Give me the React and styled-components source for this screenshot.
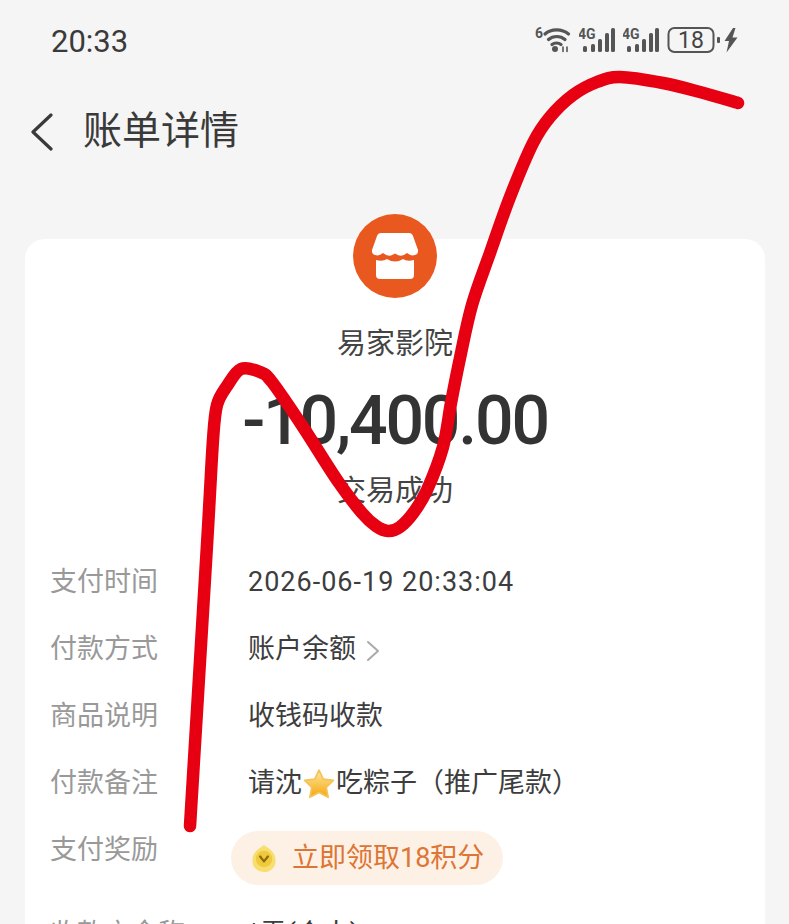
import React from "react";
import styled, { createGlobalStyle } from "styled-components";

const GlobalStyle = createGlobalStyle`
  html, body {
    margin: 0;
    padding: 0;
    background: #f5f5f5;
  }
  body {
    font-family: "Roboto", "Noto Sans CJK SC", sans-serif;
  }
`;

const Page = styled.div`
  position: relative;
  width: 789px;
  height: 924px;
  overflow: hidden;
  background: #f5f5f5;
  color: #333;
`;

const StatusBar = styled.div`
  height: 82px;
  padding: 0 50px 0 51px;
  display: flex;
  align-items: center;
  justify-content: space-between;
  box-sizing: border-box;
`;

const Time = styled.span`
  font-size: 31px;
  color: #3a3a3a;
`;

const StatusIcons = styled.div`
  display: flex;
  align-items: center;
  gap: 8px;
  margin-top: -2px;
`;

const Header = styled.div`
  height: 99px;
  padding-left: 30px;
  display: flex;
  align-items: center;
  gap: 30px;
`;

const Title = styled.h1`
  margin: 0;
  font-size: 39px;
  font-weight: 400;
  line-height: 1;
  color: #3a3a3a;
`;

const Card = styled.div`
  margin: 58px 24px 0 25px;
  padding-top: 59px;
  height: 800px;
  position: relative;
  background: #fff;
  border-radius: 20px;
`;

const ShopBadge = styled.div`
  position: absolute;
  top: -25px;
  left: 328px;
  width: 84px;
  height: 84px;
`;

const Summary = styled.div`
  display: flex;
  flex-direction: column;
  align-items: center;
`;

const Merchant = styled.div`
  margin-top: 29px;
  font-size: 29px;
  line-height: 34px;
  color: #444;
`;

const Amount = styled.div`
  margin-top: 20px;
  font-size: 68px;
  font-weight: 500;
  line-height: 80px;
  letter-spacing: -2.2px;
  color: #333;
`;

const Status = styled.div`
  margin-top: 13px;
  font-size: 29px;
  line-height: 34px;
  color: #444;
`;

const Rows = styled.div`
  margin-top: 41px;
  padding-left: 26px;
  display: flex;
  flex-direction: column;
`;

const Row = styled.div`
  height: ${(props) => (props.$tall ? "84px" : "67px")};
  display: flex;
  align-items: flex-start;
  line-height: 67px;
`;

const Label = styled.span`
  width: 197px;
  margin-left: -1px;
  margin-right: 1px;
  flex: none;
  font-size: 27px;
  color: #999;
`;

const Value = styled.span`
  display: flex;
  align-items: center;
  font-size: 27px;
  letter-spacing: ${(props) => (props.$numeric ? "1px" : "0")};
  color: #3d3d3d;
  white-space: nowrap;
`;

const Pill = styled.div`
  margin-left: -17px;
  margin-top: 14px;
  width: 272px;
  height: 54px;
  box-sizing: border-box;
  padding-left: 20px;
  display: flex;
  align-items: center;
  gap: 15px;
  border-radius: 27px;
  background: #fdf0e4;
  color: #dd7534;
  font-size: 27px;
  line-height: 54px;
`;

const Scribble = styled.svg`
  position: absolute;
  top: 0;
  left: 0;
  pointer-events: none;
`;

const SignalIcon = () => (
  <svg width="36" height="28" viewBox="0 0 36 28">
    <text x="-1" y="13" fontSize="14" fontWeight="700" fontFamily="Roboto" fill="#555">4G</text>
    <rect x="4" y="20" width="4" height="6" rx="1.6" fill="#555" />
    <rect x="12" y="18" width="4" height="8" rx="1.6" fill="#555" />
    <rect x="19" y="13" width="4" height="13" rx="1.6" fill="#555" />
    <rect x="26" y="7" width="4" height="19" rx="1.6" fill="#555" />
    <rect x="32" y="2" width="4" height="24" rx="1.6" fill="#555" />
  </svg>
);

const WifiIcon = () => (
  <svg width="36" height="28" viewBox="0 0 36 28" fill="none" stroke="#555" strokeWidth="3.2" strokeLinecap="round">
    <text x="0" y="12" fontSize="14" fontWeight="700" fontFamily="Roboto" fill="#555" stroke="none">6</text>
    <path d="M10 8C16 2.5 27 2.5 33.5 8" />
    <path d="M13.5 13.5C18 9.5 25.5 9.5 30 13.5" />
    <path d="M17 18.5C19.5 16.5 23.5 16.5 26 18.5" />
    <circle cx="20" cy="23" r="3" fill="#555" stroke="none" />
    <path d="M28 21v4.5M32 21v4.5" strokeWidth="1.6" />
  </svg>
);

const BatteryIcon = () => (
  <svg width="72" height="28" viewBox="0 0 72 28" fill="none">
    <rect x="1.5" y="2" width="45" height="24" rx="6" stroke="#555" strokeWidth="2" />
    <text x="24" y="22" textAnchor="middle" fontSize="23" fontFamily="Roboto" fill="#444">18</text>
    <rect x="50" y="11" width="3" height="6" rx="1" fill="#555" />
    <path d="M66 2 L57.5 15 H62 L59.5 26.5 L70.5 11.5 H65.5 L68.5 2 Z" fill="#555" />
  </svg>
);

const BackIcon = () => (
  <svg width="23" height="38" viewBox="0 0 23 38" fill="none" stroke="#3a3a3a" strokeWidth="3.2" strokeLinecap="round" strokeLinejoin="round">
    <path d="M21 2 L3 19 L21 36" />
  </svg>
);

const ChevronIcon = () => (
  <svg width="14" height="22" viewBox="0 0 14 22" fill="none" stroke="#aaa" strokeWidth="2" strokeLinecap="round" strokeLinejoin="round" style={{ marginLeft: 10, marginTop: 3 }}>
    <path d="M2 2 L12 11 L2 20" />
  </svg>
);

const ShopIcon = () => (
  <svg width="84" height="84" viewBox="0 0 84 84">
    <circle cx="42" cy="42" r="42" fill="#e9591f" />
    <path d="M28 19 H56 Q59 19 60 22 L65 36 Q65.5 40 62 41 Q58 42.5 54 39 Q48 44 42 39.5 Q36 44 30 39 Q26 42.5 22 41 Q18.5 40 19 36 L24 22 Q25 19 28 19 Z" fill="#fff" />
    <path d="M23 46 Q30 48 34 45 Q42 50 50 45 Q54 48 61 46 V61 Q61 65 57 65 H27 Q23 65 23 61 Z" fill="#fff" />
  </svg>
);

const StarIcon = () => (
  <svg width="32" height="32" viewBox="0 0 30 30" style={{ margin: "1px 1px 0" }}>
    <defs>
      <linearGradient id="star" x1="0" y1="0" x2="0" y2="1">
        <stop offset="0" stopColor="#fdeaa0" />
        <stop offset="1" stopColor="#f5a50c" />
      </linearGradient>
    </defs>
    <path d="M15 2 L19 10.4 L28.5 11.6 L21.8 18.2 L23.6 27.5 L15 23 L6.4 27.5 L8.2 18.2 L1.5 11.6 L11 10.4 Z" fill="url(#star)" stroke="#f3c45a" strokeWidth="1.6" strokeLinejoin="round" />
  </svg>
);

const CoinIcon = () => (
  <svg width="26" height="29" viewBox="0 0 26 30">
    <path d="M13 1 C17 4 25 8 25 17 C25 24 20 29 13 29 C6 29 1 24 1 17 C1 8 9 4 13 1 Z" fill="#f8de6e" />
    <circle cx="13" cy="15.5" r="8.5" fill="#efca3c" />
    <path d="M9 13 L13 18 L17 13" fill="none" stroke="#8f6c12" strokeWidth="2.4" strokeLinecap="round" strokeLinejoin="round" />
  </svg>
);

// pen stroke traced over the screenshot
const strokePoints = [
  [190, 826], [207, 545], [213, 440], [217, 405], [227, 386], [241, 369], [260, 372],
  [272, 382], [303, 427], [337, 480], [362, 513], [376, 526], [388, 531], [400, 527],
  [414, 512], [427, 490], [443, 447], [451, 403], [460, 358], [472, 305], [490, 253],
  [510, 197], [533, 143], [550, 117], [573, 95], [597, 82], [620, 77], [663, 83], [700, 92], [738, 103],
];

const smoothPath = (pts) => {
  let d = `M${pts[0][0]} ${pts[0][1]}`;
  for (let i = 0; i < pts.length - 1; i++) {
    const p0 = pts[i - 1] || pts[i];
    const p1 = pts[i];
    const p2 = pts[i + 1];
    const p3 = pts[i + 2] || p2;
    const c1x = p1[0] + (p2[0] - p0[0]) / 6;
    const c1y = p1[1] + (p2[1] - p0[1]) / 6;
    const c2x = p2[0] - (p3[0] - p1[0]) / 6;
    const c2y = p2[1] - (p3[1] - p1[1]) / 6;
    d += ` C${c1x} ${c1y} ${c2x} ${c2y} ${p2[0]} ${p2[1]}`;
  }
  return d;
};

const details = [
  { label: "支付时间", value: "2026-06-19 20:33:04", numeric: true },
  { label: "付款方式", value: "账户余额", chevron: true },
  { label: "商品说明", value: "收钱码收款" },
  { label: "付款备注", remark: true },
];

const App = () => (
  <Page>
    <GlobalStyle />
    <StatusBar>
      <Time>20:33</Time>
      <StatusIcons>
        <WifiIcon />
        <SignalIcon />
        <SignalIcon />
        <BatteryIcon />
      </StatusIcons>
    </StatusBar>
    <Header>
      <BackIcon />
      <Title>账单详情</Title>
    </Header>
    <Card>
      <ShopBadge>
        <ShopIcon />
      </ShopBadge>
      <Summary>
        <Merchant>易家影院</Merchant>
        <Amount>-10,400.00</Amount>
        <Status>交易成功</Status>
      </Summary>
      <Rows>
        {details.map((row) => (
          <Row key={row.label}>
            <Label>{row.label}</Label>
            {row.remark ? (
              <Value>
                请沈
                <StarIcon />
                吃粽子（推广尾款）
              </Value>
            ) : (
              <Value $numeric={row.numeric}>
                {row.value}
                {row.chevron && <ChevronIcon />}
              </Value>
            )}
          </Row>
        ))}
        <Row $tall>
          <Label>支付奖励</Label>
          <Pill>
            <CoinIcon />
            立即领取18积分
          </Pill>
        </Row>
        <Row>
          <Label>收款方全称</Label>
          <Value>*雪(个人)</Value>
        </Row>
      </Rows>
    </Card>
    <Scribble width="789" height="924" viewBox="0 0 789 924" fill="none">
      <path
        d={smoothPath(strokePoints)}
        stroke="#e60012"
        strokeWidth="12.5"
        strokeLinecap="round"
        strokeLinejoin="round"
      />
    </Scribble>
  </Page>
);

export default App;
